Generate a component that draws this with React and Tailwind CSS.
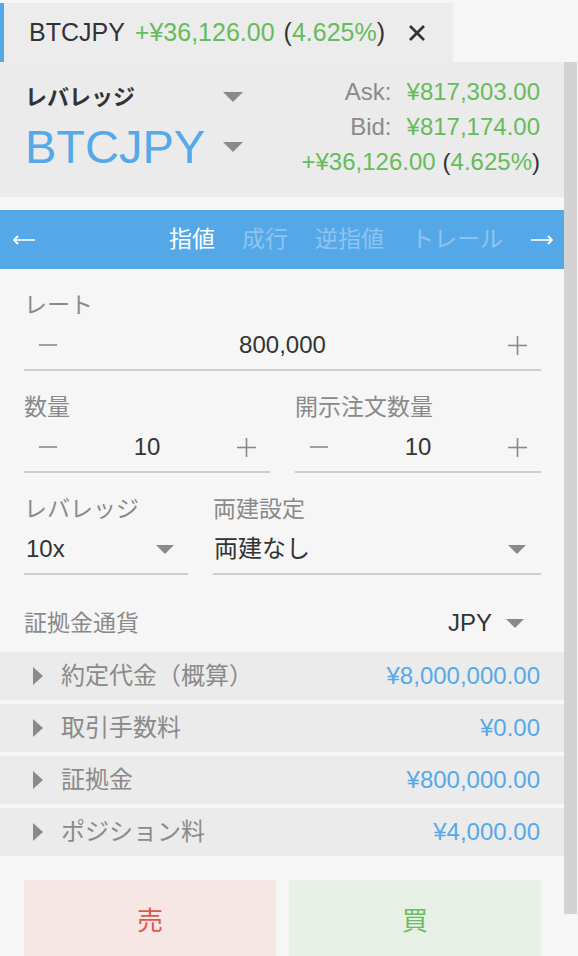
import React from "react";

const Tri = ({ className = "" }) => (
  <svg width="20" height="10" viewBox="0 0 20 10" className={className}>
    <polygon points="0,0 20,0 10,10" fill="#8a8a8a" />
  </svg>
);

const SmallTri = () => (
  <svg width="18" height="9" viewBox="0 0 18 9">
    <polygon points="0,0 18,0 9,9" fill="#8a8a8a" />
  </svg>
);

const RightTri = () => (
  <svg width="10" height="18" viewBox="0 0 10 18">
    <polygon points="0,0 10,9 0,18" fill="#8a8a8a" />
  </svg>
);

const Minus = () => (
  <svg width="18" height="18" viewBox="0 0 18 18">
    <line x1="0" y1="9" x2="18" y2="9" stroke="#8a8a8a" strokeWidth="1.6" />
  </svg>
);

const Plus = () => (
  <svg width="19" height="19" viewBox="0 0 19 19">
    <line x1="0" y1="9.5" x2="19" y2="9.5" stroke="#8a8a8a" strokeWidth="1.6" />
    <line x1="9.5" y1="0" x2="9.5" y2="19" stroke="#8a8a8a" strokeWidth="1.6" />
  </svg>
);

const Stepper = ({ value }) => (
  <div className="flex h-[50px] items-center border-b-2 border-[#cdcdcd] pl-[15px] pr-[14px]">
    <Minus />
    <div className="flex-1 text-center text-[24px] text-[#333]">{value}</div>
    <Plus />
  </div>
);

const Label = ({ children }) => (
  <div className="h-[32px] leading-[32px] text-[23px] text-[#8a8a8a]">{children}</div>
);

const Row = ({ label, value }) => (
  <div className="flex h-[48px] items-center bg-[#ebebeb] pl-[33px] pr-[24px]">
    <RightTri />
    <div className="ml-[18px] flex-1 text-[24px] text-[#8a8a8a]">{label}</div>
    <div className="text-[24px] text-[#55a9e9]">{value}</div>
  </div>
);

export default function App() {
  return (
    <div className="min-h-[956px] w-[578px] overflow-hidden bg-[#f6f6f6] font-['Liberation_Sans','Noto_Sans_CJK_JP',sans-serif]">
      {/* Tab row */}
      <div className="flex pt-[3px]">
        <div className="flex h-[59px] w-[453px] items-center border-l-4 border-[#55a8e8] bg-[#ececec] pl-[25px] text-[25px]">
          <span className="text-[#333]">BTCJPY</span>
          <span className="ml-[10px] text-[#66bb5a]">+¥36,126.00</span>
          <span className="ml-[9px] text-[#333]">
            (<span className="text-[#66bb5a]">4.625%</span>)
          </span>
          <svg width="18" height="18" viewBox="0 0 18 18" className="ml-[23px]">
            <line x1="2" y1="2" x2="16" y2="16" stroke="#333" strokeWidth="2.6" />
            <line x1="16" y1="2" x2="2" y2="16" stroke="#333" strokeWidth="2.6" />
          </svg>
        </div>
      </div>

      <div className="flex">
        <div className="w-[564px]">
          {/* Header */}
          <div className="flex h-[135px] bg-[#ebebeb] pl-[25px] pr-[24px]">
            <div className="w-[218px] pt-[20px]">
              <div className="flex h-[30px] items-center justify-between">
                <span className="text-[22px] font-bold text-[#333]">レバレッジ</span>
                <Tri />
              </div>
              <div className="mt-[9px] flex h-[52px] items-center justify-between">
                <span className="text-[47px] leading-[52px] text-[#55a9e9]">BTCJPY</span>
                <Tri />
              </div>
            </div>
            <div className="flex-1 pt-[12px] text-right text-[24px] leading-[35px]">
              <div>
                <span className="text-[#8a8a8a]">Ask:</span>
                <span className="ml-[15px] text-[#66bb5a]">¥817,303.00</span>
              </div>
              <div>
                <span className="text-[#8a8a8a]">Bid:</span>
                <span className="ml-[15px] text-[#66bb5a]">¥817,174.00</span>
              </div>
              <div>
                <span className="text-[#66bb5a]">+¥36,126.00</span>
                <span className="ml-[7px] text-[#333]">
                  (<span className="text-[#66bb5a]">4.625%</span>)
                </span>
              </div>
            </div>
          </div>

          {/* Order type bar */}
          <div className="mt-[13px] flex h-[59px] items-center bg-[#55a8e8] pl-[13px] pr-[11px]">
            <svg width="22" height="10" viewBox="0 0 22 10">
              <line x1="2" y1="5" x2="22" y2="5" stroke="#dcecfa" strokeWidth="2" />
              <polyline points="5,1 1,5 5,9" fill="none" stroke="#ffffff" strokeWidth="1.8" />
            </svg>
            <div className="flex flex-1 justify-end gap-[27px] pr-[28px] text-[23px]">
              <span className="text-white">指値</span>
              <span className="text-[#8ec4ef]">成行</span>
              <span className="text-[#8ec4ef]">逆指値</span>
              <span className="text-[#8ec4ef]">トレール</span>
            </div>
            <svg width="22" height="10" viewBox="0 0 22 10">
              <line x1="0" y1="5" x2="20" y2="5" stroke="#dcecfa" strokeWidth="2" />
              <polyline points="17,1 21,5 17,9" fill="none" stroke="#ffffff" strokeWidth="1.8" />
            </svg>
          </div>

          {/* Form */}
          <div className="pl-[24px] pr-[23px] pt-[20px]">
            <Label>レート</Label>
            <Stepper value="800,000" />

            <div className="mt-[20px] grid grid-cols-2 gap-x-[25px]">
              <div>
                <Label>数量</Label>
                <Stepper value="10" />
              </div>
              <div>
                <Label>開示注文数量</Label>
                <Stepper value="10" />
              </div>
            </div>

            <div className="mt-[20px] grid grid-cols-[164px_1fr] gap-x-[25px]">
              <div>
                <Label>レバレッジ</Label>
                <div className="flex h-[50px] items-center justify-between border-b-2 border-[#cdcdcd] pl-[2px] pr-[14px]">
                  <span className="text-[24px] text-[#333]">10x</span>
                  <SmallTri />
                </div>
              </div>
              <div>
                <Label>両建設定</Label>
                <div className="flex h-[50px] items-center justify-between border-b-2 border-[#cdcdcd] pl-[1px] pr-[15px]">
                  <span className="text-[24px] text-[#333]">両建なし</span>
                  <SmallTri />
                </div>
              </div>
            </div>

            <div className="mt-[24px] flex h-[48px] items-center pr-[17px]">
              <span className="flex-1 text-[23px] text-[#8a8a8a]">証拠金通貨</span>
              <span className="text-[24px] text-[#333]">JPY</span>
              <span className="ml-[14px]">
                <SmallTri />
              </span>
            </div>
          </div>

          {/* Summary rows */}
          <div className="mt-[5px] flex flex-col gap-[4px]">
            <Row label="約定代金（概算）" value="¥8,000,000.00" />
            <Row label="取引手数料" value="¥0.00" />
            <Row label="証拠金" value="¥800,000.00" />
            <Row label="ポジション料" value="¥4,000.00" />
          </div>

          {/* Buttons */}
          <div className="mt-[24px] grid grid-cols-2 gap-x-[13px] pl-[24px] pr-[23px]">
            <div className="flex h-[82px] items-center justify-center bg-[#f6e7e5] text-[26px] text-[#e0574f]">
              売
            </div>
            <div className="flex h-[82px] items-center justify-center bg-[#e7f0e4] text-[26px] text-[#6abd5c]">
              買
            </div>
          </div>
        </div>
        <div className="h-[852px] w-[13px] bg-[#d3d3d3]" />
      </div>
    </div>
  );
}
